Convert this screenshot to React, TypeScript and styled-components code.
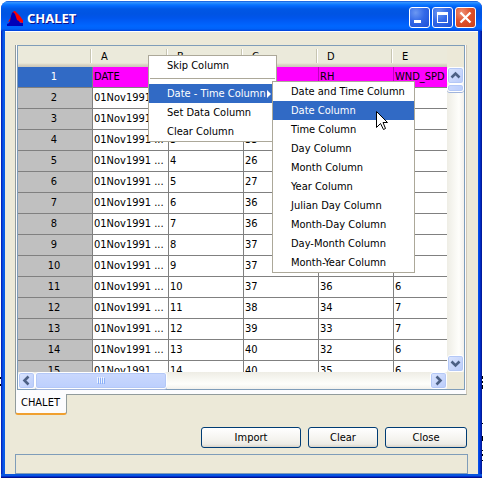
import React from "react";
import styled, { createGlobalStyle, css } from "styled-components";

const GlobalStyle = createGlobalStyle`
  *, *::before, *::after { box-sizing: border-box; }
  body {
    margin: 0;
    background: #fff;
    color: #000;
    font: 11px/19px "DejaVu Sans Condensed", "Noto Sans", sans-serif;
    overflow: hidden;
  }
  button { font: inherit; color: inherit; padding: 0; cursor: default; }
`;

const Desktop = styled.main`
  position: relative;
  padding: 1px 1px 0;
`;

const Backdrop = styled.svg<{ $side: "left" | "right" }>`
  position: absolute;
  ${(p) => p.$side}: 0;
  bottom: 0;
  width: 2px;
  height: 110px;
`;

const Window = styled.section`
  position: relative;
  border-radius: 8px 7px 0 0;
  background: linear-gradient(90deg, #001ea0 0, #0831d9 1px, #0855dd 2px, #0a60f0 3px, #0855dd 4px, #0855dd calc(100% - 4px), #0048f1 calc(100% - 3px), #0030d0 calc(100% - 2px), #00138c 100%);
  padding: 0 4px 4px;
  box-shadow: inset 0 -1px #00138c, inset 0 -2px #0030d0, inset 0 -4px #0855dd;
`;

const TitleBar = styled.header`
  display: flex;
  align-items: center;
  gap: 2px;
  height: 30px;
  margin: 0 -4px;
  padding: 3px 6px 0;
  border-radius: 8px 7px 0 0;
  background: linear-gradient(180deg, #0040c8 0, #3a93ff 1px, #288eff 2px, #127dff 3px, #0369fc 5px, #0057e5 8px, #0054e3 13px, #0055eb 17px, #005bf5 20px, #0066ff 25px, #0062f8 28px, #003dd7 30px);
`;

const Title = styled.h1`
  flex: 1;
  margin: 0 0 0 1px;
  font: bold 13px/20px "Noto Sans", sans-serif;
  color: #fff;
  text-shadow: 1px 1px #0f1089;
`;

const CaptionButton = styled.button<{ $danger?: boolean }>`
  width: 21px;
  height: 21px;
  border: 1px solid #fff;
  border-radius: 3px;
  background: ${(p) =>
    p.$danger
      ? "radial-gradient(circle at 30% 25%, #ee9378 0, #e0512b 45%, #c8401a 100%)"
      : "radial-gradient(circle at 30% 25%, #6c98f2 0, #3469e8 45%, #1c4fd6 100%)"};
  svg { display: block; width: 19px; height: 19px; }
`;

const Body = styled.div`
  background: #ece9d8;
  padding: 13px 10px 0;
  border-top: 1px solid #fff;
`;

const TabPanel = styled.div`
  margin-right: 1px;
  border: 1px solid #919b9c;
  border-top: 0;
  border-right-color: #d0c9b8;
  padding: 0 1px 4px;
  background: #fcfcfe;
`;

const ScrollPane = styled.div`
  display: grid;
  grid-template-columns: minmax(0, 1fr) 17px;
  grid-template-rows: 21px 305px 17px;
  border: 1px solid #7f9db9;
  background: #ece9d8;
`;

const Viewport = styled.div`
  grid-row: 1 / 3;
  overflow: hidden;
  background: #fff;
`;

const Sheet = styled.table`
  width: 451px;
  table-layout: fixed;
  border-collapse: separate;
  border-spacing: 0;
`;

const Col = styled.col<{ $width: number }>`
  width: ${(p) => p.$width}px;
`;

const ColumnHead = styled.th`
  position: relative;
  height: 21px;
  padding: 0 0 1px 8px;
  font-weight: normal;
  text-align: left;
  line-height: 19px;
  background: linear-gradient(180deg, #ebeadb 17px, #e2decd 18px, #d6d2c2 19px, #cbc7b8 21px);
  &::after {
    content: "";
    position: absolute;
    right: 1px;
    top: 3px;
    width: 2px;
    height: 14px;
    background: linear-gradient(90deg, #c7c5b2 1px, #fff 1px);
  }
`;

const cell = css`
  height: 21px;
  border-right: 1px solid #808080;
  border-bottom: 1px solid #808080;
  font-weight: normal;
  line-height: 20px;
  white-space: nowrap;
  overflow: hidden;
`;

const RowHead = styled.th<{ $selected: boolean }>`
  ${cell}
  padding: 0 2px 0 0;
  text-align: center;
  background: ${(p) => (p.$selected ? "#316ac5" : "#c0c0c0")};
  color: ${(p) => (p.$selected ? "#fff" : "#000")};
`;

const Cell = styled.td<{ $header: boolean }>`
  ${cell}
  padding: 0 0 0 1px;
  background: ${(p) => (p.$header ? "#ff00ff" : "#fff")};
  ${(p) => p.$header && "border-right-color: #c000c0;"}
`;

const ScrollTrack = styled.div<{ $vertical?: boolean }>`
  display: flex;
  flex-direction: ${(p) => (p.$vertical ? "column" : "row")};
  grid-column: ${(p) => (p.$vertical ? 2 : 1)};
  grid-row: ${(p) => (p.$vertical ? 2 : 3)};
  background: linear-gradient(${(p) => (p.$vertical ? "90deg" : "180deg")}, #eeede5, #fefefb 70%, #f3f1ec);
`;

const ScrollButton = styled.button`
  flex: none;
  width: 17px;
  height: 17px;
  border: 1px solid #fff;
  border-radius: 3px;
  background: linear-gradient(135deg, #dbe5fe, #b9cbfa);
  box-shadow: inset 0 0 0 1px #b4c8f6;
  svg { display: block; width: 15px; height: 15px; }
`;

const Thumb = styled.div<{ $vertical?: boolean }>`
  display: flex;
  align-items: center;
  justify-content: center;
  width: ${(p) => (p.$vertical ? "17px" : "132px")};
  height: ${(p) => (p.$vertical ? "8px" : "17px")};
  border: 1px solid #fff;
  border-radius: 3px;
  background: linear-gradient(${(p) => (p.$vertical ? "90deg" : "180deg")}, #cad8fd, #bccffd);
  box-shadow: inset 0 0 0 1px #b4c8f6, 0 1px #a0b4dc;
`;

const Spacer = styled.div`
  flex: 1;
`;

const Tab = styled.button`
  display: block;
  position: relative;
  height: 21px;
  margin-top: -1px;
  padding: 0 6px 2px 5px;
  border: 1px solid #919b9c;
  border-top: 0;
  border-bottom: 2px solid #f0a030;
  border-radius: 0 0 3px 3px;
  background: #fcfcfe;
  line-height: 18px;
`;

const Actions = styled.div`
  display: flex;
  justify-content: flex-end;
  gap: 7px;
  padding: 12px 1px 6px 0;
`;

const ActionButton = styled.button<{ $width: number }>`
  width: ${(p) => p.$width}px;
  height: 21px;
  border: 1px solid #003c74;
  border-radius: 3px;
  background: linear-gradient(180deg, #fff, #f4f3ee 60%, #ecebe5 85%, #d9d3c8);
  line-height: 18px;
`;

const StatusBar = styled.footer`
  height: 20px;
  border: 1px solid #7f9db9;
`;

const Menu = styled.div<{ $left: number; $top: number; $width: number }>`
  position: absolute;
  left: ${(p) => p.$left}px;
  top: ${(p) => p.$top}px;
  width: ${(p) => p.$width}px;
  border: 1px solid #aca899;
  background: #fff;
`;

const MenuItem = styled.button<{ $active?: boolean }>`
  display: flex;
  align-items: center;
  justify-content: space-between;
  width: 100%;
  height: 19px;
  border: 0;
  padding: 0 5px 0 18px;
  background: ${(p) => (p.$active ? "#316ac5" : "#fff")};
  color: ${(p) => (p.$active ? "#fff" : "#000")};
  line-height: 19px;
  text-align: left;
  white-space: nowrap;
  svg { flex: none; width: 4px; height: 8px; }
`;

const Separator = styled.hr`
  margin: 3px 1px 5px;
  border: 0;
  height: 1px;
  background: #aca899;
`;

const Pointer = styled.svg`
  position: absolute;
  left: 374px;
  top: 109px;
  width: 13px;
  height: 21px;
`;

const rows: string[][] = [
  ["DATE", "", "", "RH", "WND_SPD"],
  ["01Nov1991 ...", "", "", "", ""],
  ["01Nov1991 ...", "", "", "", ""],
  ["01Nov1991 ...", "3", "33", "", ""],
  ["01Nov1991 ...", "4", "26", "", ""],
  ["01Nov1991 ...", "5", "27", "", ""],
  ["01Nov1991 ...", "6", "36", "", ""],
  ["01Nov1991 ...", "7", "36", "", ""],
  ["01Nov1991 ...", "8", "37", "", ""],
  ["01Nov1991 ...", "9", "37", "", ""],
  ["01Nov1991 ...", "10", "37", "36", "6"],
  ["01Nov1991 ...", "11", "38", "34", "7"],
  ["01Nov1991 ...", "12", "39", "33", "7"],
  ["01Nov1991 ...", "13", "40", "32", "6"],
  ["01Nov1991 ...", "14", "40", "35", "6"],
];

const dateMenu = [
  "Date and Time Column",
  "Date Column",
  "Time Column",
  "Day Column",
  "Month Column",
  "Year Column",
  "Julian Day Column",
  "Month-Day Column",
  "Day-Month Column",
  "Month-Year Column",
];

const Chevron = ({ d }: { d: string }) => (
  <svg viewBox="0 0 15 15" fill="none" stroke="#4d6185" strokeWidth="2.6">
    <path d={d} />
  </svg>
);

export default function App() {
  return (
    <>
      <GlobalStyle />
      <Desktop>
        <Backdrop $side="left" viewBox="0 0 2 110" aria-hidden="true">
          <path d="M0 9h1v2h-1zM0 16h2v2h-2z" />
        </Backdrop>
        <Backdrop $side="right" viewBox="0 0 2 110" aria-hidden="true">
          <path d="M1 8h1v3h-1zM1 13h1v2h-1zM1 17h1v4h-1zM1 55h1v1h-1zM1 68h1v5h-1zM1 82h1v1h-1zM1 86h1v2h-1zM1 92h1v1h-1z" />
        </Backdrop>
        <Window>
          <TitleBar>
            <svg width="17" height="16" viewBox="0 0 17 16" aria-hidden="true">
              <path d="M1 12L4 7L5 3L7 1H8L11 4L13 6L15 9L16 10V13L12 12L8 9Z" fill="#f00" />
              <path d="M0 16V14L2 13L3 11L4 6L5 3L6 2L8 4L9 7L10 10L12 11L13 13L16 13V16Z" fill="#0000b8" />
            </svg>
            <Title>CHALET</Title>
            <CaptionButton aria-label="Minimize">
              <svg viewBox="0 0 19 19"><path d="M4 12h7v3H4z" fill="#fff" /></svg>
            </CaptionButton>
            <CaptionButton aria-label="Maximize">
              <svg viewBox="0 0 19 19"><path d="M4 4h11v11H4zM5 7v7h9V7z" fill="#fff" fillRule="evenodd" /></svg>
            </CaptionButton>
            <CaptionButton aria-label="Close window" $danger>
              <svg viewBox="0 0 19 19"><path d="M4.500 4.500L14.500 14.500M14.500 4.500L4.500 14.500" stroke="#fff" strokeWidth="2.300" /></svg>
            </CaptionButton>
          </TitleBar>
          <Body>
            <TabPanel>
              <ScrollPane>
                <Viewport>
                  <Sheet>
                    <colgroup>
                      {[75, 76, 75, 75, 75, 75].map((w, i) => <Col key={i} $width={w} />)}
                    </colgroup>
                    <thead>
                      <tr>
                        {["", "A", "B", "C", "D", "E"].map((h) => <ColumnHead key={h} scope="col">{h}</ColumnHead>)}
                      </tr>
                    </thead>
                    <tbody>
                      {rows.map((row, r) => (
                        <tr key={r}>
                          <RowHead scope="row" $selected={r === 0}>{r + 1}</RowHead>
                          {row.map((value, c) => <Cell key={c} $header={r === 0}>{value}</Cell>)}
                        </tr>
                      ))}
                    </tbody>
                  </Sheet>
                </Viewport>
                <ScrollTrack $vertical>
                  <ScrollButton aria-label="Scroll up"><Chevron d="M3.500 9.500L7.500 5.500L11.500 9.500" /></ScrollButton>
                  <Thumb $vertical />
                  <Spacer />
                  <ScrollButton aria-label="Scroll down"><Chevron d="M3.500 5.500L7.500 9.500L11.500 5.500" /></ScrollButton>
                </ScrollTrack>
                <ScrollTrack>
                  <ScrollButton aria-label="Scroll left"><Chevron d="M9.500 3.500L5.500 7.500L9.500 11.500" /></ScrollButton>
                  <Thumb>
                    <svg width="8" height="7" viewBox="0 0 8 7">
                      <path d="M0 0h1v6H0zM2 0h1v6H2zM4 0h1v6H4zM6 0h1v6H6z" fill="#eef4fe" />
                      <path d="M1 1h1v6H1zM3 1h1v6H3zM5 1h1v6H5zM7 1h1v6H7z" fill="#8cb0f8" />
                    </svg>
                  </Thumb>
                  <Spacer />
                  <ScrollButton aria-label="Scroll right"><Chevron d="M5.500 3.500L9.500 7.500L5.500 11.500" /></ScrollButton>
                </ScrollTrack>
              </ScrollPane>
            </TabPanel>
            <Tab role="tab" aria-selected="true">CHALET</Tab>
            <Actions>
              <ActionButton $width={100}>Import</ActionButton>
              <ActionButton $width={70}>Clear</ActionButton>
              <ActionButton $width={82}>Close</ActionButton>
            </Actions>
            <StatusBar />
          </Body>
          <Menu role="menu" $left={147} $top={54} $width={129}>
            <MenuItem role="menuitem">Skip Column</MenuItem>
            <Separator />
            <MenuItem role="menuitem" $active>
              Date - Time Column
              <svg viewBox="0 0 4 8" aria-hidden="true"><path d="M0 0L4 4L0 8Z" fill="#fff" /></svg>
            </MenuItem>
            <MenuItem role="menuitem">Set Data Column</MenuItem>
            <MenuItem role="menuitem">Clear Column</MenuItem>
          </Menu>
          <Menu role="menu" $left={271} $top={80} $width={143}>
            {dateMenu.map((label) => (
              <MenuItem key={label} role="menuitem" $active={label === "Date Column"}>{label}</MenuItem>
            ))}
          </Menu>
          <Pointer viewBox="0 0 13 21" aria-hidden="true">
            <path d="M1.500 1.500V17.500L5.500 13.500L8.500 19.500L10.500 18.500L8 12.500H12.500Z" fill="#fff" stroke="#000" />
          </Pointer>
        </Window>
      </Desktop>
    </>
  );
}
